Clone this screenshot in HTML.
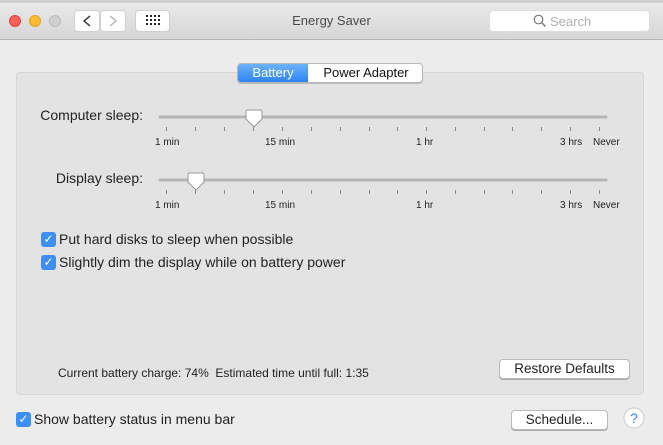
<!DOCTYPE html>
<html><head><style>
*{margin:0;padding:0;box-sizing:border-box}
body{width:663px;height:445px;overflow:hidden;background:#ececec;font-family:"Liberation Sans",sans-serif;color:#222;position:relative}
.abs{position:absolute}
.title{left:0;top:0;width:663px;height:40px;background:linear-gradient(#ebebeb,#d6d6d6);border-bottom:1px solid #b4b4b4}
.light{width:12px;height:12px;border-radius:50%;top:15px}
.btn{background:#fff;border:1px solid #d0d0d0;border-radius:4px}
.box{left:16px;top:72px;width:628px;height:323px;background:#e3e3e3;border:1px solid #d6d6d6;border-radius:4px}
.lbl{font-size:14px;color:#222}
.tl{font-size:10px;color:#222}
.cb{width:15px;height:15px;border-radius:3px;background:#3d8ff5;color:#fff;font-size:12px;line-height:15px;text-align:center}
.pb{background:#fff;border:1px solid #b9b9b9;border-radius:4px;font-size:13.5px;text-align:center;box-shadow:0 1px 0 #aaa}
</style></head><body>
<div class="abs title"></div>
<div class="abs" style="left:0;top:0;width:663px;height:3px;background:#cfcfcf"></div>
<div class="abs light" style="left:9px;background:#fc5f57;border:1px solid #e0443e"></div>
<div class="abs light" style="left:29px;background:#fdbc2e;border:1px solid #dea123"></div>
<div class="abs light" style="left:49px;background:#d0d0d0;border:1px solid #bbb"></div>
<div class="abs btn" style="left:74px;top:10px;width:26px;height:22px"></div>
<div class="abs btn" style="left:100px;top:10px;width:26px;height:22px"></div>
<svg class="abs" style="left:74px;top:10px" width="52" height="22"><path d="M16 6 L10 11 L16 16" stroke="#444" stroke-width="1.5" fill="none"/><path d="M36 6 L42 11 L36 16" stroke="#bbb" stroke-width="1.5" fill="none"/></svg>
<div class="abs btn" style="left:135px;top:10px;width:35px;height:22px"></div>
<svg class="abs" style="left:146px;top:15px" width="14" height="12"><g fill="#222"><rect x="0" y="0" width="2" height="2"/><rect x="4" y="0" width="2" height="2"/><rect x="8" y="0" width="2" height="2"/><rect x="12" y="0" width="2" height="2"/><rect x="0" y="4" width="2" height="2"/><rect x="4" y="4" width="2" height="2"/><rect x="8" y="4" width="2" height="2"/><rect x="12" y="4" width="2" height="2"/><rect x="0" y="8" width="2" height="2"/><rect x="4" y="8" width="2" height="2"/><rect x="8" y="8" width="2" height="2"/><rect x="12" y="8" width="2" height="2"/></g></svg>
<div class="abs" style="left:0;width:663px;top:13px;text-align:center;font-size:13px;color:#4a4a4a">Energy Saver</div>
<div class="abs btn" style="left:489px;top:10px;width:161px;height:22px;border-color:#ddd"></div>
<svg class="abs" style="left:533px;top:14px" width="14" height="14"><circle cx="5.5" cy="5.5" r="4.3" stroke="#777" stroke-width="1.2" fill="none"/><path d="M8.5 8.5 L12.5 12.5" stroke="#777" stroke-width="1.4"/></svg>
<div class="abs" style="left:550px;top:14px;font-size:13px;color:#b0b0b0">Search</div>

<div class="abs box"></div>
<div class="abs" style="left:237px;top:63px;width:186px;height:20px;border:1px solid #b8b8b8;border-radius:4px;background:#fff;overflow:hidden;box-shadow:0 1px 0 #bbb">
<div style="position:absolute;left:0;top:0;width:70px;height:18px;background:linear-gradient(#6cb3fa,#2f83f4);color:#fff;font-size:13px;text-align:center;line-height:18px">Battery</div>
<div style="position:absolute;left:70px;top:0;width:116px;height:18px;font-size:13px;text-align:center;line-height:18px;color:#111">Power Adapter</div>
</div>

<div class="abs lbl" style="left:20px;width:123px;text-align:right;top:107px">Computer sleep:</div>
<div class="abs lbl" style="left:20px;width:123px;text-align:right;top:170px">Display sleep:</div>

<svg class="abs" style="left:0;top:0" width="663" height="445">
<g>
<line x1="160" y1="117" x2="606" y2="117" stroke="#b5b5b5" stroke-width="3" stroke-linecap="round"/>
<g fill="#888">
<rect x="166" y="127" width="1" height="4"/><rect x="195" y="127" width="1" height="4"/><rect x="224" y="127" width="1" height="4"/><rect x="253" y="127" width="1" height="4"/><rect x="282" y="127" width="1" height="4"/><rect x="311" y="127" width="1" height="4"/><rect x="340" y="127" width="1" height="4"/><rect x="369" y="127" width="1" height="4"/><rect x="397" y="127" width="1" height="4"/><rect x="426" y="127" width="1" height="4"/><rect x="455" y="127" width="1" height="4"/><rect x="484" y="127" width="1" height="4"/><rect x="512" y="127" width="1" height="4"/><rect x="541" y="127" width="1" height="4"/><rect x="570" y="127" width="1" height="4"/><rect x="599" y="127" width="1" height="4"/>
</g>
<path d="M246 112 Q246 110 248 110 L260 110 Q262 110 262 112 L262 119 L254 127 L246 119 Z" fill="#fff" stroke="#999"/>
</g>
<g transform="translate(0,63)">
<line x1="160" y1="117" x2="606" y2="117" stroke="#b5b5b5" stroke-width="3" stroke-linecap="round"/>
<g fill="#888">
<rect x="166" y="127" width="1" height="4"/><rect x="195" y="127" width="1" height="4"/><rect x="224" y="127" width="1" height="4"/><rect x="253" y="127" width="1" height="4"/><rect x="282" y="127" width="1" height="4"/><rect x="311" y="127" width="1" height="4"/><rect x="340" y="127" width="1" height="4"/><rect x="369" y="127" width="1" height="4"/><rect x="397" y="127" width="1" height="4"/><rect x="426" y="127" width="1" height="4"/><rect x="455" y="127" width="1" height="4"/><rect x="484" y="127" width="1" height="4"/><rect x="512" y="127" width="1" height="4"/><rect x="541" y="127" width="1" height="4"/><rect x="570" y="127" width="1" height="4"/><rect x="599" y="127" width="1" height="4"/>
</g>
<path d="M188 112 Q188 110 190 110 L202 110 Q204 110 204 112 L204 119 L196 127 L188 119 Z" fill="#fff" stroke="#999"/>
</g>
<circle cx="634" cy="418" r="10" fill="#fff" stroke="#c8c8c8"/>
<text x="634" y="423" text-anchor="middle" font-family="Liberation Sans" font-size="14" fill="#2f83f4">?</text>
</svg>

<div class="abs tl" style="left:155px;top:137px">1 min</div>
<div class="abs tl" style="left:265px;top:137px">15 min</div>
<div class="abs tl" style="left:416px;top:137px">1 hr</div>
<div class="abs tl" style="left:560px;top:137px">3 hrs</div>
<div class="abs tl" style="left:593px;top:137px">Never</div>
<div class="abs tl" style="left:155px;top:200px">1 min</div>
<div class="abs tl" style="left:265px;top:200px">15 min</div>
<div class="abs tl" style="left:416px;top:200px">1 hr</div>
<div class="abs tl" style="left:560px;top:200px">3 hrs</div>
<div class="abs tl" style="left:593px;top:200px">Never</div>

<div class="abs cb" style="left:41px;top:232px">✓</div>
<div class="abs lbl" style="left:59px;top:231px">Put hard disks to sleep when possible</div>
<div class="abs cb" style="left:41px;top:255px">✓</div>
<div class="abs lbl" style="left:59px;top:254px">Slightly dim the display while on battery power</div>

<div class="abs" style="left:58px;top:366px;font-size:12px;color:#222;white-space:nowrap">Current battery charge: 74%&nbsp;&nbsp;Estimated time until full: 1:35</div>
<div class="abs pb" style="left:499px;top:359px;width:131px;height:20px;line-height:18px">Restore Defaults</div>

<div class="abs cb" style="left:16px;top:412px">✓</div>
<div class="abs lbl" style="left:34px;top:411px">Show battery status in menu bar</div>
<div class="abs pb" style="left:511px;top:410px;width:97px;height:20px;line-height:18px">Schedule...</div>
</body></html>
